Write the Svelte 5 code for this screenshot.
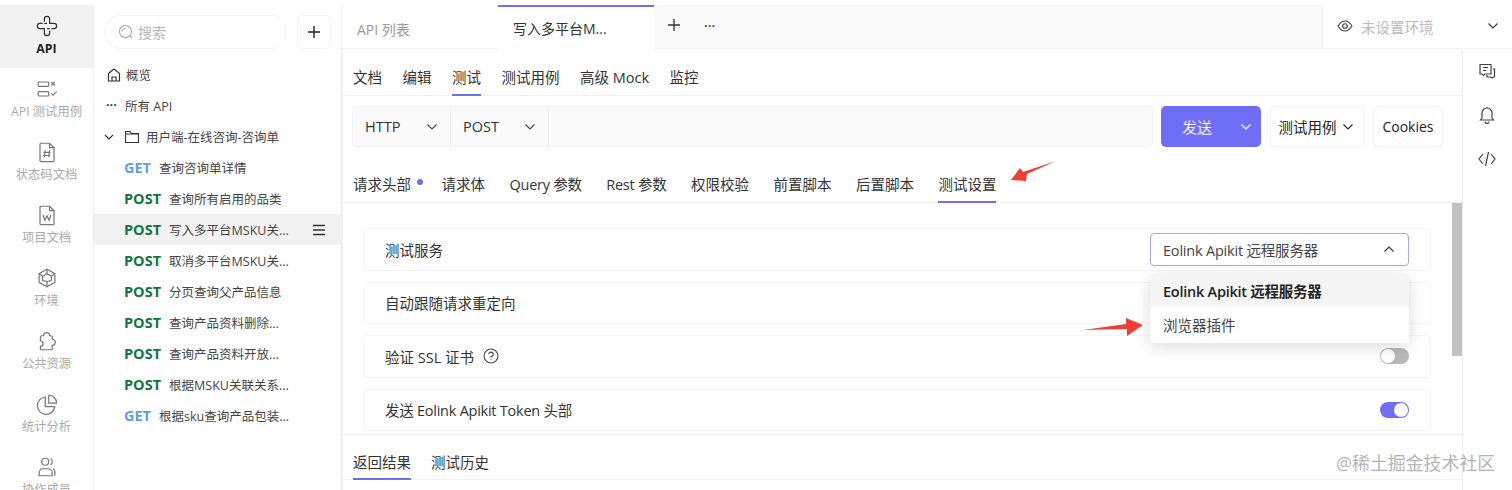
<script>
  const rail = [
    { label: 'API', active: true, icon: 'api' },
    { label: 'API 测试用例', icon: 'cases' },
    { label: '状态码文档', icon: 'code' },
    { label: '项目文档', icon: 'word' },
    { label: '环境', icon: 'cube' },
    { label: '公共资源', icon: 'puzzle' },
    { label: '统计分析', icon: 'pie' },
    { label: '协作成员', icon: 'users' }
  ]

  const apis = [
    { method: 'GET', name: '查询咨询单详情' },
    { method: 'POST', name: '查询所有启用的品类' },
    { method: 'POST', name: '写入多平台MSKU关...', active: true },
    { method: 'POST', name: '取消多平台MSKU关...' },
    { method: 'POST', name: '分页查询父产品信息' },
    { method: 'POST', name: '查询产品资料删除...' },
    { method: 'POST', name: '查询产品资料开放...' },
    { method: 'POST', name: '根据MSKU关联关系...' },
    { method: 'GET', name: '根据sku查询产品包装...' }
  ]

  const docTabs = ['文档', '编辑', '测试', '测试用例', '高级 Mock', '监控']
  const reqTabs = ['请求头部', '请求体', 'Query 参数', 'Rest 参数', '权限校验', '前置脚本', '后置脚本', '测试设置']
</script>

<div class="page">
  <nav class="rail">
    {#each rail as item}
      <div class="rail-item" class:active={item.active}>
        <svg width="28" height="28" viewBox="0 0 32 32" fill="none" stroke="currentColor" stroke-width="1.4">
          {#if item.icon === 'api'}
            <path d="M13 11V8a3 3 0 0 1 6 0v5h5a3 3 0 0 1 0 6h-3M19 21v3a3 3 0 0 1-6 0v-5H8a3 3 0 0 1 0-6h3" />
            <path d="M13 13h3M16 19h3" />
          {:else if item.icon === 'cases'}
            <rect x="6" y="8" width="12" height="5" rx="1" />
            <rect x="6" y="19" width="12" height="5" rx="1" />
            <path d="M21 8l4 4M25 8l-4 4M21 21l2 2 4-4" />
          {:else if item.icon === 'code'}
            <path d="M9 6h10l5 5v15a1 1 0 0 1-1 1H9a1 1 0 0 1-1-1V7a1 1 0 0 1 1-1z" />
            <path d="M19 6v5h5M14 14l-1 8M19 14l-1 8M12 16.500h8M11.500 20h8" />
          {:else if item.icon === 'word'}
            <path d="M9 6h10l5 5v15a1 1 0 0 1-1 1H9a1 1 0 0 1-1-1V7a1 1 0 0 1 1-1z" />
            <path d="M19 6v5h5M11.500 16l2 6 2.500-5 2.500 5 2-6" />
          {:else if item.icon === 'cube'}
            <path d="M16 6l9 5v10l-9 5-9-5V11z" />
            <path d="M16 11l5 3v5M16 11l-5 3v5M16 26v-6l-5-1M16 20l5-1M16 6v5M7 11l4 3M25 11l-4 3" />
          {:else if item.icon === 'puzzle'}
            <path d="M12 10a3.500 3.500 0 0 1 7 0h1.500a1.500 1.500 0 0 1 1.500 1.500V14a3.500 3.500 0 0 1 3.500 3.500A3.500 3.500 0 0 1 22 21v4a1 1 0 0 1-1 1H9.500a1 1 0 0 1-1-1v-3a3 3 0 0 0 0-6v-4.500A1.500 1.500 0 0 1 10 10z" />
          {:else if item.icon === 'pie'}
            <path d="M14 8a10 10 0 1 0 11 11H14z" />
            <path d="M18 6a9 9 0 0 1 9 9h-9z" />
          {:else}
            <circle cx="14" cy="10" r="4" />
            <path d="M7 26v-3a5 5 0 0 1 5-5h5a5 5 0 0 1 5 5v3zM20 6.500a4 4 0 0 1 0 7M25 26v-4a5 5 0 0 0-2-4" />
          {/if}
        </svg>
        <span>{item.label}</span>
      </div>
    {/each}
  </nav>

  <aside class="side">
    <div class="search-row">
      <div class="search">
        <svg width="16" height="16" viewBox="0 0 16 16" fill="none" stroke="#a8a8a8" stroke-width="1.1">
          <circle cx="7.500" cy="7.500" r="6" />
          <path d="M12 12l2 2M4.500 7.500a3 3 0 0 1 3-3" />
        </svg>
        <span>搜索</span>
      </div>
      <div class="add">
        <svg width="14" height="14" viewBox="0 0 14 14" stroke="#222" stroke-width="1.4"><path d="M7 1v12M1 7h12" /></svg>
      </div>
    </div>

    <div class="tree-row">
      <svg width="16" height="16" viewBox="0 0 16 16" fill="none" stroke="#333" stroke-width="1.2">
        <path d="M2.500 6.500L8 2l5.500 4.500V14h-11zM6 14v-4h4v4" />
      </svg>
      <span>概览</span>
    </div>
    <div class="tree-row">
      <span class="dots">···</span>
      <span>所有 API</span>
    </div>
    <div class="tree-row group">
      <svg width="12" height="12" viewBox="0 0 12 12" fill="none" stroke="#333" stroke-width="1.1"><path d="M2 4l4 4 4-4" /></svg>
      <svg class="folder" width="16" height="16" viewBox="0 0 16 16" fill="none" stroke="#333" stroke-width="1.1">
        <path d="M1.500 2.500h4.500l1.500 2h7v9h-13zM1.500 5h13" />
      </svg>
      <span>用户端-在线咨询-咨询单</span>
    </div>

    {#each apis as api}
      <div class="api-row" class:active={api.active}>
        <b class={api.method.toLowerCase()}>{api.method}</b>
        <span class="api-name">{api.name}</span>
        {#if api.active}
          <svg class="menu" width="14" height="12" viewBox="0 0 14 12" stroke="#333" stroke-width="1.300"><path d="M1 1.500h12M1 6h12M1 10.500h12" /></svg>
        {/if}
      </div>
    {/each}
  </aside>

  <main class="main">
    <div class="tabbar">
      <div class="tab">API 列表</div>
      <div class="tab current">写入多平台M...</div>
      <div class="tab-actions">
        <svg width="12" height="12" viewBox="0 0 12 12" stroke="#333" stroke-width="1.300"><path d="M6 0v12M0 6h12" /></svg>
        <span class="dots">···</span>
      </div>
      <div class="env">
        <svg width="16" height="12" viewBox="0 0 16 12" fill="none" stroke="#444" stroke-width="1.100">
          <path d="M1 6c2-3.300 4.300-5 7-5s5 1.700 7 5c-2 3.300-4.300 5-7 5s-5-1.700-7-5z" />
          <circle cx="8" cy="6" r="2.300" />
        </svg>
        <span class="env-name">未设置环境</span>
        <svg width="10" height="6" viewBox="0 0 10 6" fill="none" stroke="#333" stroke-width="1.100"><path d="M.5.500L5 5 9.500.500" /></svg>
      </div>
    </div>

    <div class="body">
      <div class="work">
        <div class="doc-tabs">
          {#each docTabs as t}
            <span class="underlined" class:on={t === '测试'}>{t}</span>
          {/each}
        </div>

        <div class="request">
          <div class="url-group">
            <div class="pick">HTTP <svg width="10" height="6" viewBox="0 0 10 6" fill="none" stroke="#444" stroke-width="1.100"><path d="M.5.500L5 5 9.500.500" /></svg></div>
            <div class="pick">POST <svg width="10" height="6" viewBox="0 0 10 6" fill="none" stroke="#444" stroke-width="1.100"><path d="M.5.500L5 5 9.500.500" /></svg></div>
          </div>
          <div class="send">
            <span>发送</span>
            <svg width="10" height="6" viewBox="0 0 10 6" fill="none" stroke="#fff" stroke-width="1.100"><path d="M.5.500L5 5 9.500.500" /></svg>
          </div>
          <div class="plain-btn cases-btn">测试用例 <svg width="10" height="6" viewBox="0 0 10 6" fill="none" stroke="#222" stroke-width="1.100"><path d="M.5.500L5 5 9.500.500" /></svg></div>
          <div class="plain-btn cookies">Cookies</div>
        </div>

        <div class="req-tabs">
          {#each reqTabs as t}
            <span class="underlined" class:on={t === '测试设置'} class:tight={/[a-z]/.test(t)}>
              {t}{#if t === '请求头部'}<i class="dot"></i>{/if}
            </span>
          {/each}
        </div>

        <div class="settings">
          <div class="settings-list">
            <div class="setting">
              <span>测试服务</span>
              <div class="server">
                <span>Eolink Apikit 远程服务器</span>
                <svg width="10" height="6" viewBox="0 0 10 6" fill="none" stroke="#333" stroke-width="1.100"><path d="M.5 5.500L5 1l4.500 4.500" /></svg>
              </div>
              <div class="dropdown">
                <div class="option selected">Eolink Apikit 远程服务器</div>
                <div class="option">浏览器插件</div>
              </div>
            </div>
            <div class="setting"><span>自动跟随请求重定向</span></div>
            <div class="setting">
              <span class="with-help">验证 SSL 证书
                <svg width="16" height="16" viewBox="0 0 16 16" fill="none" stroke="#444" stroke-width="1.100">
                  <circle cx="8" cy="8" r="7" />
                  <path d="M5.800 6.300A2.200 2.200 0 1 1 8 8.500v1.300M8 11.200v1" />
                </svg>
              </span>
              <i class="switch"></i>
            </div>
            <div class="setting">
              <span class="tight">发送 Eolink Apikit Token 头部</span>
              <i class="switch on"></i>
            </div>
          </div>
          <div class="scrollbar"></div>
        </div>

        <div class="result-tabs">
          <span class="underlined on">返回结果</span>
          <span class="underlined">测试历史</span>
        </div>
      </div>

      <div class="tools">
        <svg width="18" height="18" viewBox="0 0 18 18" fill="none" stroke="#444" stroke-width="1.200">
          <path d="M13 11.500V2.500H2v9.500h2l1.500 1.500L7 12h6zM5 5.500h5M5 8.500h3" />
          <path d="M15 7h1.500v8H15l-1 1-1.500-1H9v-2" />
        </svg>
        <svg width="18" height="18" viewBox="0 0 18 18" fill="none" stroke="#444" stroke-width="1.200">
          <path d="M2.500 14h13l-1.500-2V7a5 5 0 0 0-10 0v5zM7 15.500a2 2 0 0 0 4 0M9 1v1" />
        </svg>
        <svg width="18" height="18" viewBox="0 0 18 18" fill="none" stroke="#444" stroke-width="1.200">
          <path d="M5 4L1 9l4 5M13 4l4 5-4 5M10.500 2l-3 14" />
        </svg>
      </div>
    </div>
  </main>

  <svg class="arrow top-arrow" width="50" height="26" viewBox="0 0 50 26"><path d="M47 1L18 14 17 21 2 20 11 8 14 12z" fill="#ee3f35" /></svg>
  <svg class="arrow mid-arrow" width="62" height="20" viewBox="0 0 62 20"><path d="M0 13L43 7 43 1 60 8 44 19 44 12z" fill="#ee3f35" /></svg>
  <div class="watermark">@稀土掘金技术社区</div>
</div>

<style>
  :global(body) {
    margin: 0;
    background: #fff;
  }

  .page {
    position: relative;
    display: flex;
    width: 1512px;
    height: 490px;
    overflow: hidden;
    padding-top: 5px;
    box-sizing: border-box;
    background: #fff;
    font-family: "Open Sans", "Noto Sans CJK SC", sans-serif;
    font-size: 14.500px;
    color: #333;
  }

  .rail {
    flex: none;
    width: 94px;
    display: flex;
    flex-direction: column;
    border-right: 1px solid #eee;
    box-sizing: border-box;
    color: #777;
  }

  .rail-item {
    flex: none;
    height: 63px;
    display: flex;
    flex-direction: column;
    align-items: center;
    padding-top: 7px;
    box-sizing: border-box;
    font-size: 12.300px;
    color: #aaa;
  }

  .rail-item span {
    margin-top: 1px;
    line-height: 16px;
    white-space: nowrap;
  }

  .rail-item svg {
    color: #777;
  }

  .rail-item.active {
    background: #f2f2f2;
    color: #222;
    font-weight: 700;
  }

  .rail-item.active svg {
    color: #333;
  }

  .side {
    flex: none;
    width: 248px;
    border-right: 1px solid #eee;
    box-sizing: border-box;
    font-size: 12.500px;
  }

  .search-row {
    display: flex;
    gap: 10px;
    padding: 10px 0 0 10px;
    height: 54px;
    box-sizing: border-box;
  }

  .search {
    width: 183px;
    height: 34px;
    display: flex;
    align-items: center;
    gap: 4px;
    padding-left: 13px;
    box-sizing: border-box;
    border: 1px solid #f3f3f3;
    border-radius: 17px;
    color: #b5b5b5;
    font-size: 14px;
  }

  .add {
    width: 34px;
    height: 34px;
    display: flex;
    align-items: center;
    justify-content: center;
    border: 1px solid #f3f3f3;
    border-radius: 5px;
    box-sizing: border-box;
  }

  .tree-row {
    height: 31px;
    display: flex;
    align-items: center;
    gap: 4px;
    padding-left: 12px;
    color: #444;
  }

  .tree-row .dots {
    width: 15px;
    line-height: 1;
    font-weight: 700;
  }

  .tree-row.group {
    padding-left: 9px;
    gap: 9px;
  }

  .tree-row.group span {
    margin-left: -3px;
  }

  .api-row {
    position: relative;
    height: 31px;
    display: flex;
    align-items: center;
    padding-left: 30px;
    color: #444;
  }

  .api-row.active {
    background: #f2f2f2;
  }

  .api-row b {
    font-size: 14.500px;
    font-weight: 700;
    margin-right: 8px;
  }

  .get {
    color: #5f9ee8;
  }

  .post {
    color: #12753f;
  }

  .menu {
    position: absolute;
    left: 218px;
    top: 10px;
  }

  .main {
    flex: 1;
    min-width: 0;
    display: flex;
    flex-direction: column;
  }

  .tabbar {
    flex: none;
    height: 44px;
    display: flex;
    background: #f9f9f9;
    border-bottom: 1px solid #f0f0f0;
    box-sizing: border-box;
  }

  .tab {
    width: 156px;
    padding: 2px 15px 0;
    box-sizing: border-box;
    line-height: 46px;
    background: #fff;
    color: #999;
    font-size: 14px;
  }

  .tab.current {
    height: 44px;
    color: #333;
    border-top: 2px solid #6e6ef0;
    padding-top: 0;
    line-height: 44px;
  }

  .tab-actions {
    flex: 1;
    display: flex;
    align-items: center;
    gap: 24px;
    padding: 0 0 4px 14px;
  }

  .tab-actions .dots {
    font-size: 13px;
    font-weight: 700;
    color: #555;
  }

  .env {
    width: 190px;
    flex: none;
    display: flex;
    align-items: center;
    justify-content: space-between;
    padding: 0 14px 1px 14px;
    box-sizing: border-box;
    background: #fff;
    border-left: 1px solid #f0f0f0;
    color: #bbb;
  }

  .env-name {
    flex: 1;
    margin-left: 8px;
  }

  .body {
    flex: 1;
    min-height: 0;
    display: flex;
  }

  .work {
    flex: 1;
    min-width: 0;
    border-left: 1px solid #f2f2f2;
    border-right: 1px solid #eee;
    display: flex;
    flex-direction: column;
  }

  .doc-tabs {
    flex: none;
    height: 47px;
    box-sizing: border-box;
    display: flex;
    gap: 20.500px;
    padding: 8px 0 0 10px;
    border-bottom: 1px solid #f0f0f0;
  }

  .underlined {
    position: relative;
    display: flex;
    align-items: center;
    white-space: nowrap;
  }

  .underlined.on::after {
    content: '';
    position: absolute;
    left: 0;
    right: 0;
    bottom: -1px;
    height: 2px;
    background: #6e6ef0;
  }

  .request {
    flex: none;
    display: flex;
    height: 41px;
    margin: 10px 0 0 9px;
  }

  .url-group {
    width: 801px;
    display: flex;
    background: #fafafa;
    border: 1px solid #f3f3f3;
    border-radius: 4px;
    box-sizing: border-box;
  }

  .pick {
    width: 98px;
    display: flex;
    align-items: center;
    justify-content: space-between;
    padding: 0 13px 0 12px;
    box-sizing: border-box;
    border-right: 1px solid #f0f0f0;
  }

  .send {
    width: 100px;
    margin-left: 8px;
    display: flex;
    align-items: center;
    justify-content: space-between;
    box-sizing: border-box;
    padding: 0 10px 0 21px;
    background: #6e6ef6;
    border-radius: 5px;
    color: #f0f0ff;
    font-size: 15px;
  }

  .plain-btn {
    display: flex;
    align-items: center;
    justify-content: center;
    gap: 6px;
    height: 41px;
    box-sizing: border-box;
    border: 1px solid #f3f3f3;
    border-radius: 5px;
    color: #222;
  }

  .cases-btn {
    width: 95px;
    margin-left: 9px;
    padding-right: 4px;
  }

  .cookies {
    width: 70px;
    margin-left: 8px;
    font-size: 14px;
  }

  .req-tabs {
    flex: none;
    height: 56px;
    box-sizing: border-box;
    display: flex;
    gap: 24.500px;
    padding: 18px 0 0 10px;
    border-bottom: 1px solid #f0f0f0;
  }

  .dot {
    width: 6px;
    height: 6px;
    margin: 0 -6px 3px 6px;
    border-radius: 50%;
    background: #6e6ef0;
  }

  .settings {
    flex: none;
    position: relative;
    height: 232px;
    box-sizing: border-box;
    border-bottom: 1px solid #eee;
  }

  .settings-list {
    display: flex;
    flex-direction: column;
    gap: 11px;
    padding: 25px 0 0 20px;
    width: 1068px;
  }

  .setting {
    position: relative;
    height: 42.500px;
    display: flex;
    align-items: center;
    justify-content: space-between;
    padding: 0 21px;
    box-sizing: border-box;
    border: 1px solid #f5f5f5;
    border-radius: 4px;
  }

  .with-help {
    display: flex;
    align-items: center;
    gap: 9px;
  }

  .tight {
    letter-spacing: -0.25px;
  }

  .server {
    width: 259px;
    height: 33px;
    display: flex;
    align-items: center;
    justify-content: space-between;
    padding: 0 14px 0 12px;
    box-sizing: border-box;
    border: 1px solid #a9a4e4;
    border-radius: 4px;
    color: #444;
    letter-spacing: -0.2px;
  }

  .dropdown {
    position: absolute;
    z-index: 2;
    top: 45px;
    right: 21px;
    width: 259px;
    background: #fff;
    box-shadow: 0 4px 16px rgba(0, 0, 0, 0.14);
  }

  .option {
    height: 33px;
    display: flex;
    align-items: center;
    padding-left: 13px;
    color: #444;
  }

  .option:last-child {
    height: 36px;
    padding-bottom: 2px;
    box-sizing: border-box;
  }

  .option.selected {
    background: #f5f5f5;
    color: #222;
    font-weight: 600;
    letter-spacing: -0.25px;
  }

  .switch {
    position: relative;
    width: 29px;
    height: 16px;
    border-radius: 8px;
    background: #b9b9b9;
  }

  .switch::after {
    content: '';
    position: absolute;
    left: 1px;
    top: 1px;
    width: 14px;
    height: 14px;
    border-radius: 50%;
    background: #fff;
  }

  .switch.on {
    background: #6e6ef6;
  }

  .switch.on::after {
    left: 14px;
  }

  .scrollbar {
    position: absolute;
    top: 0;
    right: 0;
    width: 10px;
    height: 153px;
    background: #c1c1c1;
  }

  .result-tabs {
    flex: none;
    height: 45px;
    box-sizing: border-box;
    display: flex;
    gap: 20px;
    padding-left: 10px;
    border-bottom: 1px solid #f0f0f0;
    padding-top: 8px;
  }

  .tools {
    flex: none;
    width: 49px;
    display: flex;
    flex-direction: column;
    align-items: center;
    gap: 26px;
    padding: 13px 1px 0 0;
    box-sizing: border-box;
  }

  .arrow {
    position: absolute;
  }

  .top-arrow {
    left: 1009px;
    top: 160px;
  }

  .mid-arrow {
    left: 1083px;
    top: 317px;
  }

  .watermark {
    position: absolute;
    left: 1336px;
    top: 449px;
    font-size: 17.900px;
    color: #a9a9a9;
    white-space: nowrap;
    opacity: 0.85;
  }
</style>
